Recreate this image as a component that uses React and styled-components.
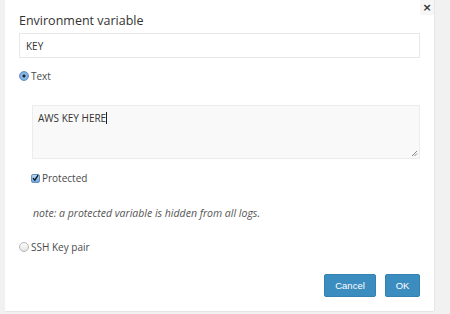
import React from "react";
import styled, { createGlobalStyle } from "styled-components";

const GlobalStyle = createGlobalStyle`
  html, body {
    margin: 0;
    padding: 0;
    background: #f1f1f1;
  }
  body {
    font-family: "Open Sans", "Liberation Sans", sans-serif;
    color: #4a4a4a;
  }
`;

const Page = styled.div`
  width: 450px;
  height: 314px;
  padding-left: 5px;
  box-sizing: border-box;
`;

const Dialog = styled.div`
  position: relative;
  width: 429px;
  height: 311px;
  background: #fff;
  box-shadow: 1px 0 0 #e6e6e6, 0 1px 0 #e6e6e6;
  padding: 11px 14px 0 14px;
  box-sizing: border-box;
  display: flex;
  flex-direction: column;
`;

const Close = styled.button`
  position: absolute;
  top: 0;
  right: 0;
  width: 14px;
  height: 15px;
  padding: 0;
  border: none;
  background: #f6f6f6;
  color: #333;
  font-family: "DejaVu Sans", sans-serif;
  font-size: 11px;
  font-weight: bold;
  line-height: 15px;
  text-align: center;
`;

const Title = styled.h2`
  margin: 0;
  height: 19px;
  font-size: 12.5px;
  line-height: 19px;
  font-weight: 400;
  color: #333;
`;

const Input = styled.div`
  margin-top: 3px;
  height: 25px;
  border: 1px solid #e8e8e8;
  box-sizing: border-box;
  padding-left: 6px;
  display: flex;
  align-items: center;
  font-size: 10px;
  color: #333;
`;

const Option = styled.label`
  display: flex;
  align-items: center;
  gap: 2px;
  height: 16px;
  margin-top: ${(p) => p.$top}px;
  margin-left: ${(p) => p.$left || 0}px;
  font-size: 10px;
  color: #4a4a4a;
`;

const Radio = styled.span`
  width: 8px;
  height: 8px;
  border-radius: 50%;
  border: 1px solid ${(p) => (p.$checked ? "#6b8fb5" : "#b5b5b5")};
  background: ${(p) =>
    p.$checked
      ? "radial-gradient(circle, #222 0 1.3px, #8fc0ee 1.8px, #5c9ee0 100%)"
      : "linear-gradient(#fdfdfd, #e4e4e4)"};
  flex: none;
`;

const Check = styled.span`
  width: 9px;
  height: 9px;
  border-radius: 2px;
  border: 1px solid #6b8fb5;
  background: linear-gradient(#b8d7f5, #6aa6e4);
  box-sizing: border-box;
  flex: none;
  display: flex;
  align-items: center;
  justify-content: center;
`;

const TextArea = styled.div`
  position: relative;
  margin-top: 21px;
  margin-left: 13px;
  height: 54px;
  background: #f9f9f9;
  border: 1px solid #ececec;
  box-sizing: border-box;
  padding: 5px 5px;
  font-size: 10px;
  line-height: 15px;
  color: #333;
`;

const Caret = styled.span`
  display: inline-block;
  width: 1px;
  height: 12px;
  background: #222;
  vertical-align: -2px;
`;

const Grip = styled.svg`
  position: absolute;
  right: 1px;
  bottom: 1px;
`;

const Note = styled.p`
  margin: 19px 0 0 14px;
  font-size: 10.5px;
  line-height: 16px;
  font-style: italic;
  color: #555;
`;

const Footer = styled.div`
  margin-top: 19px;
  display: flex;
  justify-content: flex-end;
  gap: 9px;
`;

const Button = styled.button`
  height: 23px;
  width: ${(p) => p.$w}px;
  padding: 0;
  border: 1px solid #3482b1;
  border-radius: 2px;
  background: #3c8dbf;
  color: #fff;
  font-family: "Liberation Sans", Arial, sans-serif;
  font-size: 9.5px;
`;

export default function App() {
  return (
    <Page>
      <GlobalStyle />
      <Dialog>
        <Close>×</Close>
        <Title>Environment variable</Title>
        <Input>KEY</Input>
        <Option $top={10}>
          <Radio $checked />
          Text
        </Option>
        <TextArea>
          AWS KEY HERE<Caret />
          <Grip width="7" height="7" viewBox="0 0 7 7">
            <path d="M1 6L6 1M3.5 6L6 3.5" stroke="#888" strokeWidth="1" />
          </Grip>
        </TextArea>
        <Option $top={11} $left={12}>
          <Check>
            <svg width="8" height="8" viewBox="0 0 8 8">
              <path d="M1.2 4.2L3.2 6.4L7 0.8" fill="none" stroke="#111" strokeWidth="1.5" />
            </svg>
          </Check>
          Protected
        </Option>
        <Note>note: a protected variable is hidden from all logs.</Note>
        <Option $top={18}>
          <Radio />
          SSH Key pair
        </Option>
        <Footer>
          <Button $w={52}>Cancel</Button>
          <Button $w={35}>OK</Button>
        </Footer>
      </Dialog>
    </Page>
  );
}
